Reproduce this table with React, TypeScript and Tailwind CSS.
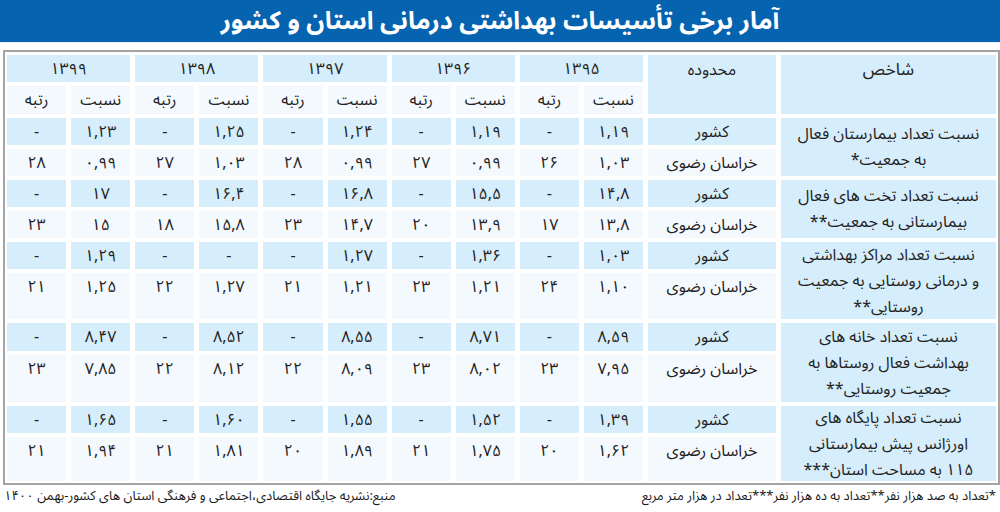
const years = ['۱۳۹۵', '۱۳۹۶', '۱۳۹۷', '۱۳۹۸', '۱۳۹۹'];

interface Indicator {
  title: string[];
  country: string[];
  province: string[];
}

// values per year: [ratio, rank] from 1395 to 1399
const indicators: Indicator[] = [
  {
    title: ['نسبت تعداد بیمارستان فعال', 'به جمعیت*'],
    country: ['۱,۱۹', '-', '۱,۱۹', '-', '۱,۲۴', '-', '۱,۲۵', '-', '۱,۲۳', '-'],
    province: ['۱,۰۳', '۲۶', '۰,۹۹', '۲۷', '۰,۹۹', '۲۸', '۱,۰۳', '۲۷', '۰,۹۹', '۲۸'],
  },
  {
    title: ['نسبت تعداد تخت های فعال', 'بیمارستانی به جمعیت**'],
    country: ['۱۴,۸', '-', '۱۵,۵', '-', '۱۶,۸', '-', '۱۶,۴', '-', '۱۷', '-'],
    province: ['۱۳,۸', '۱۷', '۱۳,۹', '۲۰', '۱۴,۷', '۲۳', '۱۵,۸', '۱۸', '۱۵', '۲۳'],
  },
  {
    title: ['نسبت تعداد مراکز بهداشتی', 'و درمانی روستایی به جمعیت', 'روستایی**'],
    country: ['۱,۰۳', '-', '۱,۳۶', '-', '۱,۲۷', '-', '-', '-', '۱,۲۹', '-'],
    province: ['۱,۱۰', '۲۴', '۱,۲۱', '۲۳', '۱,۲۱', '۲۱', '۱,۲۷', '۲۲', '۱,۲۵', '۲۱'],
  },
  {
    title: ['نسبت تعداد خانه های', 'بهداشت فعال روستاها به', 'جمعیت روستایی**'],
    country: ['۸,۵۹', '-', '۸,۷۱', '-', '۸,۵۵', '-', '۸,۵۲', '-', '۸,۴۷', '-'],
    province: ['۷,۹۵', '۲۳', '۸,۰۲', '۲۳', '۸,۰۹', '۲۲', '۸,۱۲', '۲۲', '۷,۸۵', '۲۳'],
  },
  {
    title: ['نسبت تعداد پایگاه های', 'اورژانس پیش بیمارستانی', '۱۱۵ به مساحت استان***'],
    country: ['۱,۳۹', '-', '۱,۵۲', '-', '۱,۵۵', '-', '۱,۶۰', '-', '۱,۶۵', '-'],
    province: ['۱,۶۲', '۲۰', '۱,۷۵', '۲۱', '۱,۸۹', '۲۰', '۱,۸۱', '۲۱', '۱,۹۴', '۲۱'],
  },
];

const fa = { fontFamily: '"Noto Sans Arabic", "DejaVu Sans", sans-serif' };

function Cell({ value, light }: { value: string; light?: boolean }) {
  return (
    <div
      className={
        'flex items-start justify-center text-[16px] leading-[29px] text-[#222] ' +
        (light ? 'bg-[#d6edfb]' : 'bg-[#f4f9fd]')
      }
    >
      {value}
    </div>
  );
}

export default function App() {
  return (
    <div dir="rtl" className="w-[1000px] h-[512px] bg-white overflow-hidden" style={fa}>
      <div className="h-[43px] bg-[#0663b0] border-b border-[#e6f0f8] text-center">
        <h1 className="text-white text-[25px] font-bold leading-[42px] whitespace-nowrap">آمار برخی تأسیسات بهداشتی درمانی استان و کشور</h1>
      </div>

      <div className="mt-[7px] ml-[1px] w-[997px] border-2 border-[#a4a4a4] pt-[3px] px-[2px] pb-[2px]">
        <div className="grid grid-cols-[215px_128px_repeat(10,minmax(0,1fr))] grid-rows-[27px_28px_27px_27px_27px_27px_27px_46px_28px_47px_27px_44px] gap-x-[5px] gap-y-[4px]">
          <div className="row-span-2 bg-[#d6edfb] text-[17px] text-[#222] text-center pt-[2px] leading-[26px]">شاخص</div>
          <div className="row-span-2 bg-[#d6edfb] text-[16px] text-[#222] text-center pt-[2px] leading-[26px]">محدوده</div>
          {years.map((y) => (
            <div key={y} className="col-span-2 bg-[#d6edfb] flex items-center justify-center text-[16px] text-[#222]">
              {y}
            </div>
          ))}
          {years.map((y) => [
            <Cell key={y + 'r'} value="نسبت" />,
            <Cell key={y + 'k'} value="رتبه" />,
          ])}

          {indicators.map((ind, i) => [
            <div
              key={'t' + i}
              className="row-span-2 bg-[#d6edfb] flex flex-col items-center justify-center text-[16px] leading-[26px] text-[#222] text-center"
            >
              {ind.title.map((line) => (
                <span key={line} className="whitespace-nowrap">{line}</span>
              ))}
            </div>,
            <Cell key={'c' + i} value="کشور" light />,
            ...ind.country.map((v, j) => <Cell key={'cv' + i + j} value={v} light />),
            <Cell key={'p' + i} value="خراسان رضوی" />,
            ...ind.province.map((v, j) => <Cell key={'pv' + i + j} value={v} />),
          ])}
        </div>
      </div>

      <div className="flex justify-between items-center h-[24px] px-[4px] text-[13px] text-[#1a1a1a]">
        <span>*تعداد به صد هزار نفر**تعداد به ده هزار نفر***تعداد در هزار متر مربع</span>
        <span>منبع:نشریه جایگاه اقتصادی،اجتماعی و فرهنگی استان های کشور-بهمن ۱۴۰۰</span>
      </div>
    </div>
  );
}
